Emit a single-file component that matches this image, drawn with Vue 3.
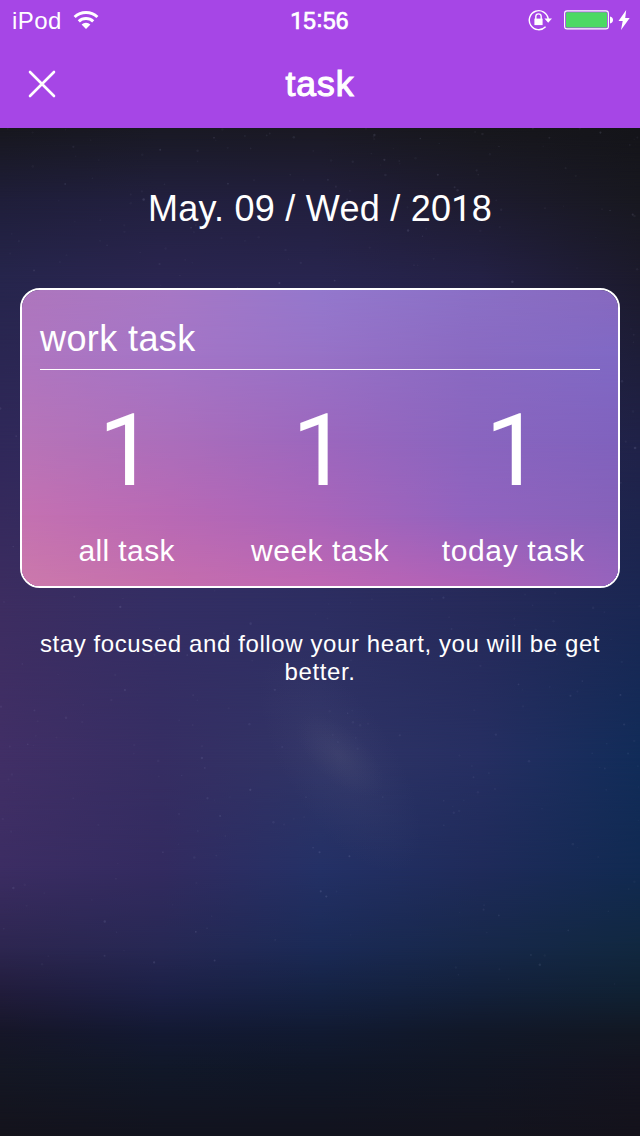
<script setup>
const stats = [
  { label: 'all task', value: '1', cls: 'all' },
  { label: 'week task', value: '1', cls: 'week' },
  { label: 'today task', value: '1', cls: 'today' },
]

// Each row is a horizontal gradient at a given height; rows fade into one another.
const sky = [
  { y: 0, c: ['#17171e', '#191924', '#1a1923', '#17171c', '#141419'] },
  { y: 72, c: ['#1f1e3a', '#22203f', '#221f3d', '#1d1b2e', '#181820'] },
  { y: 150, c: ['#26254c', '#2a2550', '#28254f', '#242145', '#1c1a2c'] },
  { y: 320, c: ['#30285a', '#302c5e', '#2c2a58', '#25264f', '#202249'] },
  { y: 480, c: ['#3d2d61', '#342e64', '#2d2e62', '#262a5a', '#1a2753'] },
  { y: 630, c: ['#412f66', '#362e63', '#303466', '#262f62', '#112c59'] },
  { y: 740, c: ['#3c2d63', '#332b60', '#243166', '#1f2b5a', '#112a52'] },
  { y: 820, c: ['#2d2650', '#272854', '#1b2a56', '#17284a', '#112840'] },
  { y: 865, c: ['#211c3b', '#1c2046', '#152243', '#13203a', '#102133'] },
  { y: 905, c: ['#161628', '#131932', '#111a31', '#111828', '#121823'] },
  { y: 940, c: ['#141724', '#111829', '#101728', '#111624', '#141420'] },
  { y: 1008, c: ['#14131c', '#12131e', '#12131e', '#13131d', '#14121b'] },
]

const card = [
  { y: 0, c: ['#ae76bd', '#a778c5', '#9478cd', '#8b70c6', '#8769bf'] },
  { y: 65, c: ['#af76c0', '#a475c7', '#9772c7', '#8a6ac2', '#8069c5'] },
  { y: 150, c: ['#b774b8', '#ab6ebb', '#9c67be', '#8a65bf', '#8062be'] },
  { y: 225, c: ['#c471b1', '#b869b5', '#a965ba', '#9263bf', '#8662ba'] },
  { y: 296, c: ['#cb79ab', '#c56ead', '#bf67b3', '#b061b7', '#9763bd'] },
]

function layers(rows) {
  return rows.map((row, i) => {
    const mask = i
      ? `linear-gradient(to bottom, transparent ${rows[i - 1].y}px, #000 ${row.y}px)`
      : 'none'
    return { background: `linear-gradient(to right, ${row.c.join(', ')})`, maskImage: mask }
  })
}

const skyLayers = layers(sky)
const cardLayers = layers(card)

let seed = 41
const rand = () => {
  seed = (seed * 16807) % 2147483647
  return seed / 2147483647
}
const stars = Array.from({ length: 520 }, () => {
  const x = rand() * 640
  const y = Math.pow(rand(), 1.2) * 860
  return { x, y, r: 0.7 + rand() * 0.6, o: 0.04 + Math.pow(rand(), 3) * 0.1 }
})
</script>

<template>
  <div class="screen">
    <header class="header">
      <div class="status">
        <div class="side">
          <span class="carrier">iPod</span>
          <svg class="wifi" width="26" height="20" viewBox="0 0 26 20">
            <g fill="none" stroke="#fff" stroke-width="3">
              <path d="M1.6 7a16.6 16.6 0 0 1 22.8 0" />
              <path d="M5.8 11.4a10.4 10.4 0 0 1 14.4 0" />
            </g>
            <path d="M13 19l-4.4-4.5a6.2 6.2 0 0 1 8.8 0z" fill="#fff" />
          </svg>
        </div>
        <span class="time"><span class="one">1</span>5<span class="colon">:</span>56</span>
        <div class="side right">
          <svg width="24" height="22" viewBox="0 0 24 22">
            <path d="M17.6 17.8A9.5 9.5 0 1 1 20.2 10" fill="none" stroke="#fff" stroke-width="1.4" />
            <path d="M16.4 9.6H24L20.2 13.8z" fill="#fff" />
            <path d="M6.4 9.6h8.2v6.5H6.4z" fill="#fff" />
            <path d="M7.8 10V7.6a2.7 2.7 0 0 1 5.4 0V10" fill="none" stroke="#fff" stroke-width="1.4" />
          </svg>
          <svg class="battery" width="50" height="20" viewBox="0 0 50 20">
            <rect x=".6" y=".9" width="43.8" height="18" rx="2.5" fill="none" stroke="#fff" stroke-width="1.1" />
            <rect x="2" y="2.3" width="41" height="15.2" rx="1" fill="#4cd964" />
            <path d="M46 6.5q3 .8 3 3.5t-3 3.5z" fill="#fff" />
          </svg>
          <svg class="bolt" width="12" height="20" viewBox="0 0 12 20">
            <path d="M8.2 0L.5 11h4.2L3 20 11.7 8H7.2z" fill="#fff" />
          </svg>
        </div>
      </div>
      <nav class="nav">
        <svg class="close" width="28" height="28" viewBox="0 0 28 28">
          <path d="M2 2l24 24M26 2L2 26" stroke="#fff" stroke-width="2.6" stroke-linecap="round" />
        </svg>
        <h1 class="title">task</h1>
      </nav>
    </header>

    <main class="content">
      <div class="backdrop">
        <div v-for="(l, i) in skyLayers" :key="i" class="layer" :style="l" />
        <div class="nebula" />
        <div class="nebula core" />
        <svg class="layer" width="640" height="1008">
          <circle v-for="(s, i) in stars" :key="i" :cx="s.x" :cy="s.y" :r="s.r" fill="#c4c9f0" :opacity="s.o" />
        </svg>
      </div>
      <p class="date">May. 09 / Wed / 20<span class="one">1</span>8</p>
      <section class="card">
        <div class="backdrop">
          <div v-for="(l, i) in cardLayers" :key="i" class="layer" :style="l" />
        </div>
        <h2 class="card-title">work task</h2>
        <div class="stats">
          <div v-for="s in stats" :key="s.label" class="stat">
            <span class="value">{{ s.value }}</span>
            <span class="label" :class="s.cls">{{ s.label }}</span>
          </div>
        </div>
      </section>
      <p class="quote">stay focused and follow your heart, you will be get better.</p>
    </main>
  </div>
</template>

<style>
body { margin: 0; background: #14131c; }
</style>

<style scoped>
.screen {
  width: 640px;
  height: 1136px;
  overflow: hidden;
  display: flex;
  flex-direction: column;
  color: #fff;
  font-family: "Liberation Sans", Arial, sans-serif;
}
.header { height: 128px; background: #a646e6; }
.status {
  height: 40px;
  display: grid;
  grid-template-columns: 1fr auto 1fr;
  align-items: center;
  padding: 0 10px 0 12px;
  box-sizing: border-box;
}
.side { display: flex; align-items: center; }
.right { justify-content: flex-end; }
.carrier { font-size: 24px; line-height: 28px; letter-spacing: .4px; margin-top: 2px; }
.wifi { margin-left: 11.5px; }
.time {
  margin: 2px 3px 0 0;
  font-size: 23px;
  line-height: 28px;
  letter-spacing: .2px;
  -webkit-text-stroke: .7px #fff;
}
.colon { position: relative; top: -2px; }
.battery { margin-left: 12px; }
.bolt { margin-left: 4px; }
.one { font-family: Roboto, sans-serif; }
.nav {
  height: 88px;
  display: grid;
  grid-template-columns: 28px 1fr 28px;
  align-items: center;
  padding: 0 28px;
}
.title {
  margin: 0;
  text-align: center;
  font-size: 35.5px;
  line-height: 40px;
  font-weight: 400;
  letter-spacing: 1px;
  -webkit-text-stroke: 1.1px #fff;
}
.content { position: relative; flex: 1; padding: 0 20px; }
.backdrop { position: absolute; inset: 0; overflow: hidden; z-index: 0; }
.layer { position: absolute; inset: 0; }
.nebula {
  position: absolute;
  left: 215px;
  top: 580px;
  width: 250px;
  height: 110px;
  transform: rotate(58deg);
  background: radial-gradient(closest-side, rgba(100, 100, 140, .12), transparent);
}
.core {
  left: 285px;
  top: 601px;
  width: 110px;
  height: 52px;
  transform: rotate(42deg);
  background: radial-gradient(closest-side, rgba(110, 110, 130, .12), transparent);
}
.date {
  position: relative;
  margin: 0;
  padding-top: 60px;
  height: 100px;
  text-align: center;
  font-size: 36px;
  line-height: 42px;
  letter-spacing: .25px;
}
.card {
  position: relative;
  box-sizing: border-box;
  height: 300px;
  border: 2px solid #fff;
  border-radius: 20px;
  overflow: hidden;
}
.card-title {
  position: relative;
  margin: 0 18px;
  padding-top: 28px;
  height: 51px;
  border-bottom: 1px solid #fff;
  font-size: 36px;
  line-height: 42px;
  font-weight: 400;
  letter-spacing: .4px;
}
.stats { position: relative; display: grid; grid-template-columns: repeat(3, 1fr); padding: 0 8px; }
.stat { display: flex; flex-direction: column; align-items: center; }
.value { font-family: Roboto, sans-serif; font-size: 100px; line-height: 120px; margin-top: 21px; }
.label { font-size: 30px; line-height: 34px; margin-top: 23px; }
.all { letter-spacing: .4px; }
.week { letter-spacing: .5px; }
.today { letter-spacing: .65px; }
.quote {
  position: relative;
  margin: 42px 0 0;
  text-align: center;
  font-size: 24px;
  line-height: 28px;
  letter-spacing: .6px;
}
</style>
